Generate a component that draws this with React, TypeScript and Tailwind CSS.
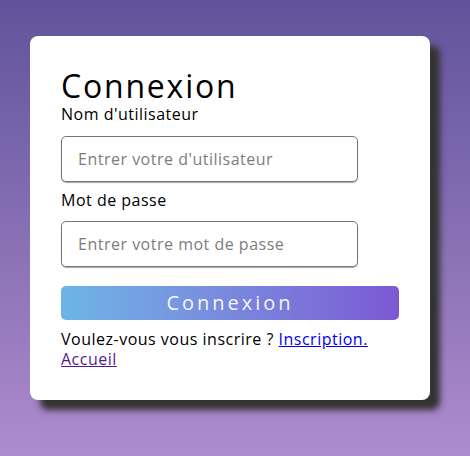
export default function App() {
  return (
    <div
      className="min-h-[456px] w-full bg-gradient-to-b from-[#61539b] to-[#ae8bcd] pl-[30px] pt-[36px] pb-[56px]"
      style={{ fontFamily: '"Open Sans", "Liberation Sans", sans-serif' }}
    >
      <div className="w-[400px] h-[364px] rounded-lg bg-white px-[31px] pt-[31px] shadow-[10px_10px_6px_#333]">
        <h1 className="text-[32px] leading-[37px] tracking-[1.8px] text-black">Connexion</h1>
        <form className="flex flex-col tracking-[0.5px]" onSubmit={(e) => e.preventDefault()}>
          <label className="text-base leading-5 text-black">Nom d'utilisateur</label>
          <input
            type="text"
            placeholder="Entrer votre d'utilisateur"
            className="mt-3 h-[46px] w-[297px] rounded-[5px] border border-[#767676] px-[16px] text-base tracking-[0.5px] text-black placeholder:text-[#7d7d7d] shadow-[0_1px_1px_rgba(0,0,0,0.35)] outline-none"
          />
          <label className="mt-2 text-base leading-5 text-black">Mot de passe</label>
          <input
            type="password"
            placeholder="Entrer votre mot de passe"
            className="mt-[11px] h-[46px] w-[297px] rounded-[5px] border border-[#767676] px-[16px] text-base tracking-[0.5px] text-black placeholder:text-[#7d7d7d] shadow-[0_1px_1px_rgba(0,0,0,0.35)] outline-none"
          />
          <button
            type="submit"
            className="mt-[19px] h-[34px] w-full rounded-[5px] bg-gradient-to-r from-[#6db5e6] to-[#7b58d3] text-[20px] tracking-[3px] text-white/95"
          >
            Connexion
          </button>
          <p className="mt-[9px] text-base leading-5 text-black">
            Voulez-vous vous inscrire ?{" "}
            <a href="#inscription" className="text-[#0000ee] underline">
              Inscription.
            </a>
            <br />
            <a href="#accueil" className="text-[#551a8b] underline">
              Accueil
            </a>
          </p>
        </form>
      </div>
    </div>
  );
}
